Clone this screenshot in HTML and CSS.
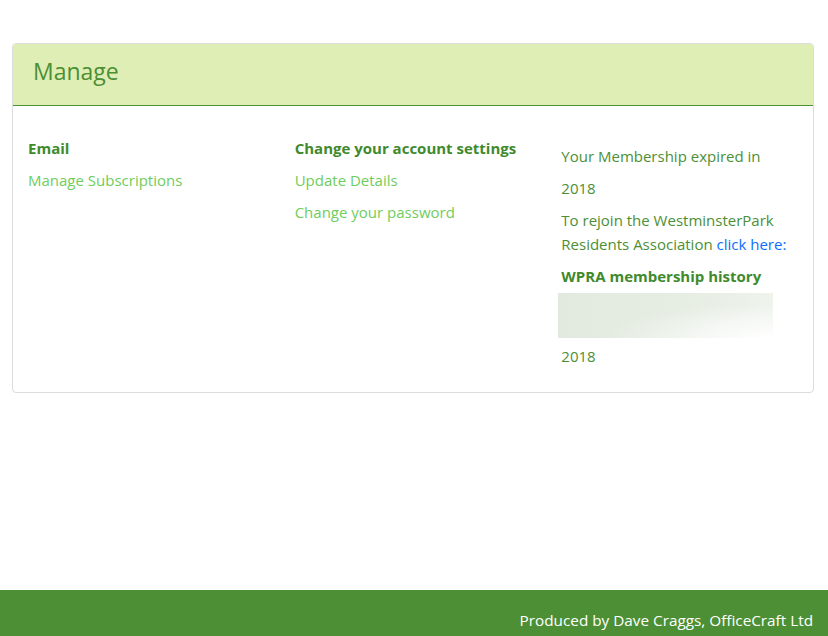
FILE: index.html
```html
<!DOCTYPE html>
<html>
<head>
  <meta charset="UTF-8">
  <meta name="viewport" content="width=device-width, initial-scale=1.0">
  <title>Manage</title>
  <link rel="stylesheet" href="styles.css">
</head>
<body>
  <main class="page">
    <div class="card">
      <div class="card-header">
        <h2 class="card-title">Manage</h2>
      </div>
      <div class="card-body">
        <div class="col">
          <h4 class="col-heading">Email</h4>
          <a class="col-link" href="#">Manage Subscriptions</a>
        </div>
        <div class="col">
          <h4 class="col-heading">Change your account settings</h4>
          <a class="col-link" href="#">Update Details</a>
          <a class="col-link" href="#">Change your password</a>
        </div>
        <div class="col membership">
          <p class="line">Your Membership expired in</p>
          <p class="line">2018</p>
          <p class="rejoin">To rejoin the WestminsterPark Residents Association <a class="blue-link" href="#">click here:</a></p>
          <h4 class="col-heading history">WPRA membership history</h4>
          <div class="history-img"></div>
          <p class="line year">2018</p>
        </div>
      </div>
    </div>
  </main>

  <footer class="footer">
    <span>Produced by Dave Craggs, OfficeCraft Ltd</span>
  </footer>
</body>
</html>
```

FILE: styles.css
```css
:root {
  --green: #4c8f34;
  --green-dark: #3f8a2c;
  --light-green: #6fcd5c;
  --header-bg: #dfeeb4;
  --border: #dcdcdc;
}

body {
  font-family: "Open Sans", "Noto Sans", sans-serif;
  margin: 0;
  padding: 0;
  background-color: #ffffff;
  color: var(--green);
  height: 100vh;
  display: flex;
  flex-direction: column;
  overflow: hidden;
}

.page {
  flex: 1;
  padding: 43px 14px 0 12px;
}

.card {
  border: 1px solid var(--border);
  border-radius: 4px;
  overflow: hidden;
}

.card-header {
  background-color: var(--header-bg);
  border-bottom: 1px solid var(--green);
  height: 62px;
  box-sizing: border-box;
  display: flex;
  align-items: center;
  padding: 0 0 8px 20px;
}

.card-title {
  margin: 0;
  font-size: 23px;
  font-weight: 400;
  color: var(--green);
}

.card-body {
  display: grid;
  grid-template-columns: 1fr 1fr 1fr;
  padding: 26px 0 20px 0;
}

.col {
  display: flex;
  flex-direction: column;
  align-items: flex-start;
  padding-left: 15px;
}

.col-heading {
  margin: 0;
  font-size: 15px;
  font-weight: 700;
  line-height: 32px;
  color: var(--green-dark);
}

.col-link {
  font-size: 15px;
  line-height: 32px;
  color: var(--light-green);
  text-decoration: none;
}

.membership {
  padding-top: 8px;
  padding-left: 12px;
}

.line {
  margin: 0;
  font-size: 15px;
  line-height: 32px;
  padding-left: 3px;
}

.rejoin {
  margin: 0;
  font-size: 15px;
  line-height: 24px;
  padding: 4px 0 0 3px;
}

.blue-link {
  color: #0d6efd;
  text-decoration: none;
}

.history {
  padding-left: 3px;
  margin-top: 4px;
}

.history-img {
  width: 215px;
  height: 45px;
  margin-top: 1px;
  background: radial-gradient(ellipse at 100% 100%, #ffffff 0%, rgba(255, 255, 255, 0) 55%),
              linear-gradient(90deg, #e2eadf 0%, #e6ede3 60%, #eef3ec 100%);
}

.year {
  margin-top: 2px;
}

.footer {
  background-color: #4c8f34;
  color: #ffffff;
  height: 46px;
  box-sizing: border-box;
  display: flex;
  align-items: center;
  justify-content: flex-end;
  padding: 14px 15px 0 0;
  font-size: 15.3px;
}
```
